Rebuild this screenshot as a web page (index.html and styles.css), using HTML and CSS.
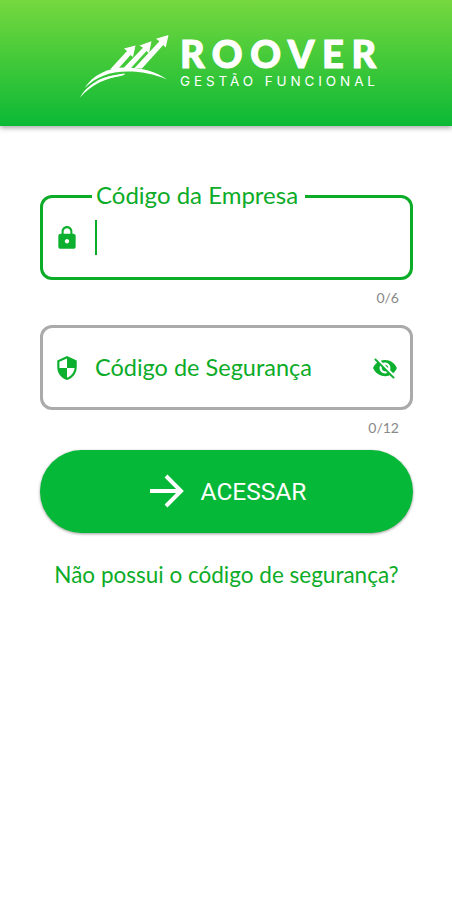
FILE: index.html
```html
<!DOCTYPE html>
<html lang="pt-BR">
<head>
    <meta charset="UTF-8">
    <meta name="viewport" content="width=device-width, initial-scale=1.0">
    <title>Roover</title>
    <link rel="stylesheet" href="styles.css">
</head>
<body>
    <header class="header">
        <svg class="logo-icon" viewBox="0 0 90 64" fill="#fff">
            <path d="M5.500 52C14 39 29 31.500 46 31.500c17 0 31 4 42 12C75 38 62 35.500 49 35.500 30 35.500 17 41 5.500 52z"/>
            <path d="M1 61.500C8 49 22 40 46 37.500l-1 1.500C27 42 13 48 1 61.500z"/>
            <path d="M16 46C24 41 34 39 46 38.500c-8 3.500-18 2.500-30 7.500z"/>
            <path d="M31 33.500L48 15l-3-2.500 11.500-3-2.500 11.500-2.500-2L39.500 32.500z"/>
            <path d="M44.500 32L64 11.700l-3.500-2.200 12-4.200-2.500 12-2.500-2.200L52 32z"/>
            <path d="M55.500 32L80.500 5.200l-3.500-2.500 12.500-3.800-2.800 12.500-2.500-2.400L63 32.500z"/>
        </svg>
        <div class="logo-text">
            <div class="brand">ROOVER</div>
            <div class="slogan">GESTÃO FUNCIONAL</div>
        </div>
    </header>

    <main class="container">
        <fieldset class="field active">
            <legend>Código da Empresa</legend>
            <svg class="icon" viewBox="0 0 24 24">
                <path d="M18 8h-1V6c0-2.760-2.240-5-5-5S7 3.240 7 6v2H6c-1.100 0-2 .9-2 2v10c0 1.100.9 2 2 2h12c1.100 0 2-.9 2-2V10c0-1.100-.9-2-2-2zm-6 9c-1.100 0-2-.9-2-2s.9-2 2-2 2 .9 2 2-.9 2-2 2zm3.100-9H8.900V6c0-1.710 1.390-3.100 3.100-3.100s3.100 1.390 3.100 3.100v2z"/>
            </svg>
            <span class="cursor"></span>
        </fieldset>
        <div class="counter">0/6</div>

        <div class="field">
            <svg class="icon" viewBox="0 0 24 24">
                <path d="M12 1L3 5v6c0 5.550 3.840 10.740 9 12 5.160-1.260 9-6.450 9-12V5l-9-4zm0 10.990h7c-.53 4.120-3.280 7.790-7 8.940V12H5V6.300l7-3.110v8.800z"/>
            </svg>
            <span class="label">Código de Segurança</span>
            <svg class="icon eye" viewBox="0 0 24 24">
                <path d="M12 7c2.760 0 5 2.240 5 5 0 .65-.13 1.260-.36 1.830l2.920 2.920c1.510-1.260 2.700-2.890 3.430-4.750-1.730-4.390-6-7.500-11-7.500-1.400 0-2.740.25-3.980.7l2.160 2.160C10.740 7.130 11.350 7 12 7zM2 4.270l2.280 2.280.46.46C3.080 8.300 1.780 10.020 1 12c1.730 4.390 6 7.500 11 7.500 1.550 0 3.030-.3 4.380-.84l.42.42L19.730 22 21 20.730 3.270 3 2 4.270zM7.530 9.800l1.550 1.550c-.05.21-.08.43-.08.65 0 1.660 1.340 3 3 3 .22 0 .44-.03.65-.08l1.550 1.550c-.67.33-1.410.53-2.200.53-2.760 0-5-2.240-5-5 0-.79.2-1.530.53-2.200zm4.310-.78l3.150 3.150.02-.16c0-1.660-1.340-3-3-3l-.17.01z"/>
            </svg>
        </div>
        <div class="counter">0/12</div>

        <button class="btn">
            <svg class="arrow" viewBox="0 0 34 34">
                <path d="M0 17h31M16 2l15 15-15 15"/>
            </svg>
            <span>ACESSAR</span>
        </button>
        <a class="link">Não possui o código de segurança?</a>
    </main>
</body>
</html>
```

FILE: styles.css
```css
* {
    box-sizing: border-box;
}
body {
    font-family: Lato, sans-serif;
    background-color: #fff;
    color: #0cac28;
    margin: 0;
}
.header {
    display: flex;
    align-items: flex-start;
    height: 126px;
    padding: 36px 0 0 79px;
    background: linear-gradient(#76d83e, #0bb935);
    box-shadow: 0 2px 5px rgba(0, 0, 0, 0.35);
    color: white;
}
.logo-icon {
    width: 90px;
    height: 64px;
    overflow: visible;
}
.logo-text {
    margin-left: 11px;
    white-space: nowrap;
}
.brand {
    font-size: 38px;
    font-weight: 900;
    line-height: 35px;
    letter-spacing: 7.6px;
    -webkit-text-stroke: 1px white;
}
.slogan {
    font-family: Inter, sans-serif;
    font-size: 13.5px;
    line-height: 20px;
    letter-spacing: 3.9px;
}
.container {
    display: flex;
    flex-direction: column;
    padding: 56px 39px 0 40px;
}
.field {
    display: flex;
    align-items: center;
    height: 85px;
    margin: 0;
    padding: 0 12px 0 11px;
    border: 3px solid #aaa;
    border-radius: 12px;
    font-size: 23.5px;
}
.field.active {
    height: 98px;
    padding-top: 10px;
    border-color: #0cac28;
}
.field legend {
    margin-left: 38px;
    padding: 0 7px 2px 4px;
    font-size: 24px;
    line-height: 26px;
}
.icon {
    flex: none;
    width: 26px;
    height: 26px;
    fill: #0cb02e;
}
.eye {
    margin-left: auto;
}
.label {
    margin-left: 15px;
    padding-bottom: 2px;
}
.cursor {
    width: 2px;
    height: 35px;
    margin-left: 15px;
    background-color: #0cac28;
}
.counter {
    height: 45px;
    padding: 9px 14px 0 0;
    text-align: right;
    font-size: 14px;
    line-height: 17px;
    color: #888;
}
.btn {
    display: flex;
    align-items: center;
    justify-content: center;
    gap: 17px;
    height: 83px;
    margin-top: -5px;
    padding: 0 4px 1px 7px;
    border: none;
    border-radius: 42px;
    background-color: #06b837;
    box-shadow: 0 1px 3px rgba(0, 0, 0, 0.4);
    color: white;
    font-family: Roboto, sans-serif;
    font-size: 24.5px;
}
.arrow {
    width: 34px;
    height: 34px;
    fill: none;
    stroke: white;
    stroke-width: 4;
}
.link {
    margin-top: 28px;
    text-align: center;
    font-size: 22.5px;
    line-height: 28px;
}
```
